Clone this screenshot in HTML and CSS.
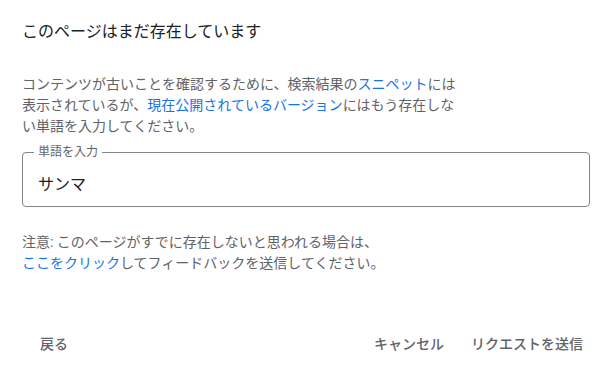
FILE: index.html
```html
<!DOCTYPE html>
<html lang="ja">
<head>
<meta charset="utf-8">
<title>このページはまだ存在しています</title>
<link rel="stylesheet" href="styles.css">
</head>
<body>
<div class="dialog">
  <h1 class="title">このページはまだ存在しています</h1>
  <p class="desc">コンテンツが古いことを確認するために、検索結果の<a class="link" href="#">スニペット</a>には表示されているが、<a class="link" href="#">現在公開されているバージョン</a>にはもう存在しない単語を入力してください。</p>
  <fieldset class="field">
    <legend class="field-label">単語を入力</legend>
    <input class="field-input" type="text" value="サンマ">
  </fieldset>
  <p class="note">注意: このページがすでに存在しないと思われる場合は、<br><a class="link" href="#">ここをクリック</a>してフィードバックを送信してください。</p>
  <div class="actions">
    <button class="btn" type="button">戻る</button>
    <span class="spacer"></span>
    <button class="btn" type="button">キャンセル</button>
    <button class="btn" type="button">リクエストを送信</button>
  </div>
</div>
</body>
</html>
```
FILE: styles.css
```css
html, body {
  margin: 0;
  padding: 0;
  background: #ffffff;
}
body {
  font-family: Roboto, "Noto Sans CJK JP", "Noto Sans", sans-serif;
  color: #5f6368;
}
.dialog {
  width: 611px;
  height: 383px;
  box-sizing: border-box;
  padding: 20px 21px 0 22px;
  display: flex;
  flex-direction: column;
}
.title {
  margin: 0;
  font-size: 16px;
  line-height: 24px;
  font-weight: 400;
  color: #202124;
}
.desc {
  margin: 30px 0 0 0;
  width: 440px;
  font-size: 14px;
  line-height: 21px;
  color: #5f6368;
}
.link {
  color: #1a73e8;
  text-decoration: none;
}
.field {
  margin: 7px 0 0 0;
  padding: 0 15px;
  border: 1px solid #80868b;
  border-radius: 4px;
  min-width: 0;
}
.field-label {
  margin-left: -4px;
  padding: 0 4px;
  font-size: 12px;
  line-height: 16px;
  color: #5f6368;
}
.field-input {
  display: block;
  width: 100%;
  height: 46px;
  box-sizing: border-box;
  margin: 0;
  padding: 0;
  border: none;
  outline: none;
  background: transparent;
  font-family: inherit;
  font-size: 16px;
  color: #202124;
}
.note {
  margin: 25px 0 0 0;
  font-size: 14px;
  line-height: 21px;
  color: #5f6368;
}
.actions {
  margin: 51px -5px 0 6px;
  display: flex;
  align-items: center;
  gap: 3px;
}
.spacer {
  flex: 1;
}
.btn {
  height: 36px;
  padding: 0 12px;
  border: none;
  background: transparent;
  font-family: inherit;
  font-size: 14px;
  font-weight: 500;
  color: #5f6368;
  cursor: pointer;
}
```
